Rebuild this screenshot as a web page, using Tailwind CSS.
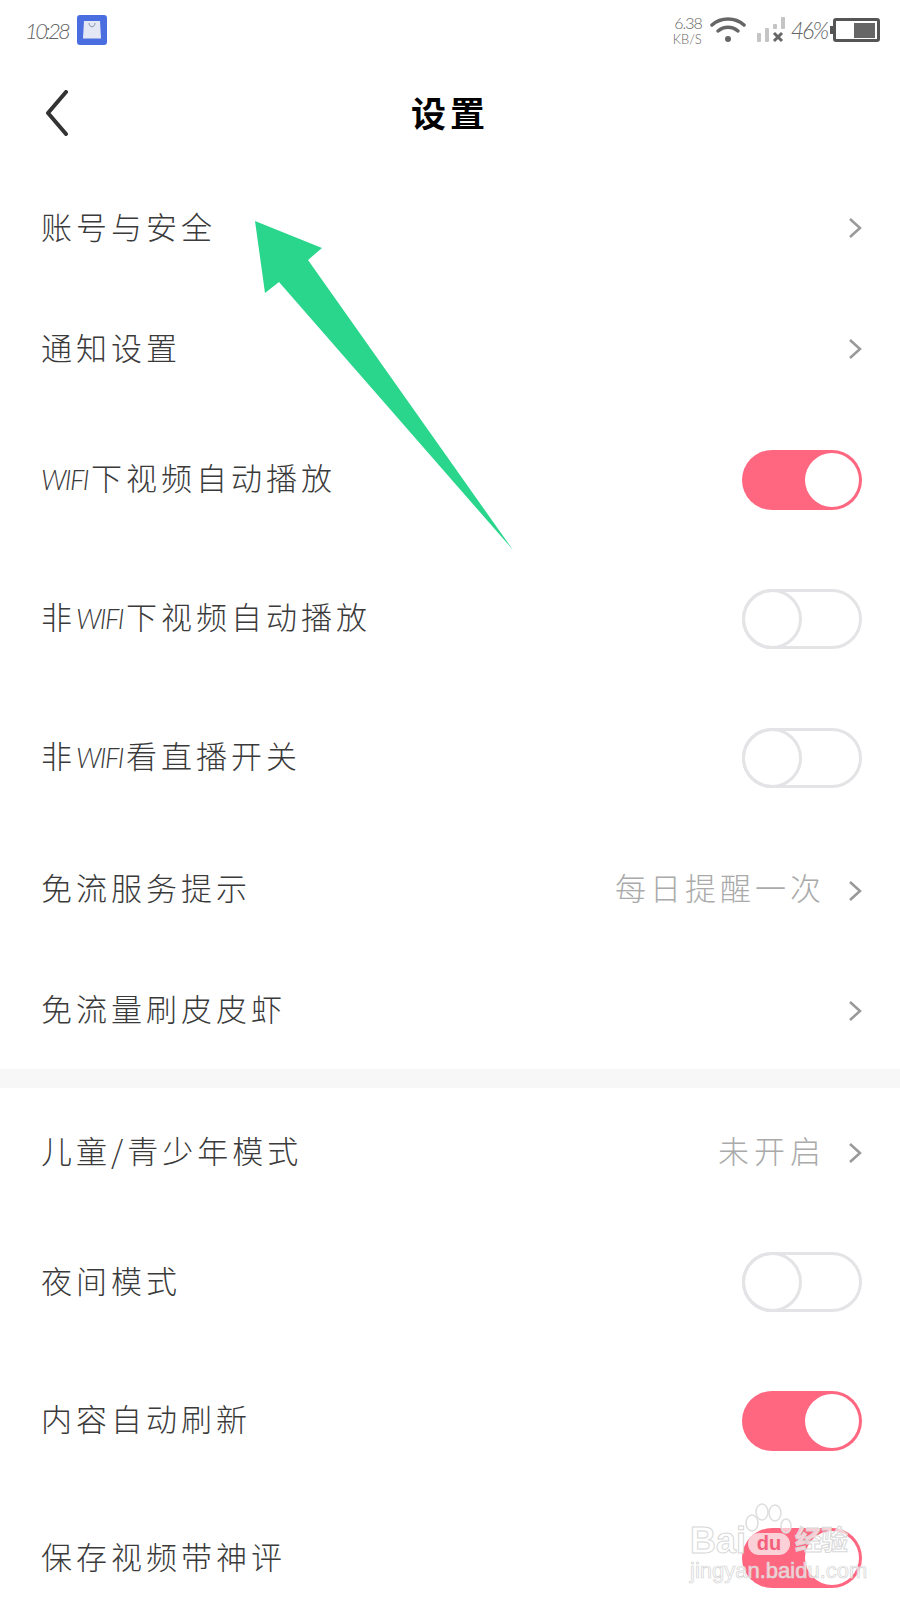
<!DOCTYPE html>
<html>

<head>
    <title>设置</title>
    <script src="https://cdn.jsdelivr.net/npm/@tailwindcss/browser@4"></script>
</head>

<body class="bg-white">
    <div class="relative w-[900px] h-[1600px] overflow-hidden bg-white text-[#3a3a3a] font-['Noto_Sans_CJK_SC','Noto_Sans',sans-serif]">

        <!-- Status bar -->
        <div class="h-[60px] pl-[25px] pr-[20px] flex items-center justify-between text-[#666]">
            <div class="flex items-center gap-[9px]">
                <span class="italic font-light text-[22px] tracking-[-2.600px] font-['Lato',sans-serif]">10:28</span>
                <svg width="30" height="30" viewBox="0 0 30 30">
                    <rect width="30" height="30" rx="3" fill="#4a6ee0" />
                    <path d="M7 6h16l1 17.500h-18z" fill="#e4e8f4" />
                    <path d="M12 8c0 5 6 5 6 0" fill="none" stroke="#8a93b0" stroke-width="1" />
                </svg>
            </div>
            <div class="flex items-center">
                <div class="flex flex-col items-end leading-none mr-[8px] font-['Lato',sans-serif]">
                    <span class="text-[16px] font-light tracking-[-1px]">6.38</span>
                    <span class="text-[13px] font-light mt-[2px]">KB/S</span>
                </div>
                <svg width="36" height="28" viewBox="0 0 36 28" class="mr-[9px]">
                    <g fill="none" stroke="#666" stroke-width="3.500" stroke-linecap="round">
                        <path d="M2 9c9-8 23-8 32 0" />
                        <path d="M8 15c6-5 14-5 20 0" />
                    </g>
                    <circle cx="18" cy="23" r="3" fill="#666" />
                </svg>
                <svg width="30" height="28" viewBox="0 0 30 28" class="mr-[6px]">
                    <g fill="#c4c4c4">
                        <rect x="2" y="17" width="4" height="9" rx="1" />
                        <rect x="10" y="12" width="4" height="14" rx="1" />
                        <rect x="18" y="8" width="4" height="5" rx="1" />
                        <rect x="26" y="1" width="4" height="12" rx="1" />
                    </g>
                    <path d="M19 17l8 8m0-8l-8 8" stroke="#666" stroke-width="3" />
                </svg>
                <span class="text-[23px] italic font-light tracking-[-2px] mr-[6px] font-['Lato',sans-serif]">46%</span>
                <div class="relative w-[47px] h-[24px] rounded-[3px] border-[3px] border-[#555] flex justify-end items-center pr-[2px]">
                    <div class="absolute left-[-6px] top-[5px] w-[3px] h-[8px] bg-[#555]"></div>
                    <div class="w-[21px] h-[15px] bg-[#666]"></div>
                </div>
            </div>
        </div>

        <!-- Header -->
        <div class="relative h-[108px] flex items-center justify-center pb-[6px]">
            <svg width="24" height="46" viewBox="0 0 24 46" class="absolute left-[45px] top-[30px]">
                <path d="M21 2L3 23l18 21" fill="none" stroke="#333" stroke-width="4" stroke-linecap="round" stroke-linejoin="round" />
            </svg>
            <h1 class="text-[35px] font-bold text-black tracking-[4px] leading-none">设置</h1>
        </div>

        <!-- First group -->
        <div class="flex items-center justify-between pl-[41px] pr-[38px] h-[121px]">
            <span class="pb-[4px] text-[31px] font-light tracking-[4px]">账号与安全</span>
            <svg class="mb-[2px]" width="14" height="22" viewBox="0 0 14 22"><path d="M2 2l10 9-10 9" fill="none" stroke="#999" stroke-width="2.500" /></svg>
        </div>
        <div class="flex items-center justify-between pl-[41px] pr-[38px] h-[120px]">
            <span class="pb-[4px] text-[31px] font-light tracking-[4px]">通知设置</span>
            <svg width="14" height="22" viewBox="0 0 14 22"><path d="M2 2l10 9-10 9" fill="none" stroke="#999" stroke-width="2.500" /></svg>
        </div>
        <div class="flex items-center justify-between pl-[41px] pr-[38px] h-[140px]">
            <span class="pb-[4px] text-[31px] font-light tracking-[4px]"><span class="mr-[3px] italic text-[27px] tracking-[-1.500px] font-['Lato',sans-serif]">WIFI</span>下视频自动播放</span>
            <div class="mt-[2px] w-[120px] h-[60px] rounded-full bg-[#ff6680] flex items-center justify-end pr-[3px]">
                <div class="w-[54px] h-[54px] rounded-full bg-white"></div>
            </div>
        </div>
        <div class="flex items-center justify-between pl-[41px] pr-[38px] h-[138px]">
            <span class="pb-[4px] text-[31px] font-light tracking-[4px]">非<span class="mr-[3px] italic text-[27px] tracking-[-1.500px] font-['Lato',sans-serif]">WIFI</span>下视频自动播放</span>
            <div class="mt-[2px] w-[120px] h-[60px] rounded-full border-[3px] border-[#e4e4e7] flex items-center">
                <div class="w-[60px] h-[60px] -ml-[3px] rounded-full border-[3px] border-[#e4e4e7]"></div>
            </div>
        </div>
        <div class="flex items-center justify-between pl-[41px] pr-[38px] h-[140px]">
            <span class="pb-[4px] text-[31px] font-light tracking-[4px]">非<span class="mr-[3px] italic text-[27px] tracking-[-1.500px] font-['Lato',sans-serif]">WIFI</span>看直播开关</span>
            <div class="mt-[2px] w-[120px] h-[60px] rounded-full border-[3px] border-[#e4e4e7] flex items-center">
                <div class="w-[60px] h-[60px] -ml-[3px] rounded-full border-[3px] border-[#e4e4e7]"></div>
            </div>
        </div>
        <div class="flex items-center justify-between pl-[41px] pr-[38px] h-[124px]">
            <span class="pb-[4px] text-[31px] font-light tracking-[4px]">免流服务提示</span>
            <div class="flex items-center gap-[23px]">
                <span class="pb-[4px] text-[31px] font-light tracking-[4px] text-[#aaa]">每日提醒一次</span>
                <svg class="mt-[4px]" width="14" height="22" viewBox="0 0 14 22"><path d="M2 2l10 9-10 9" fill="none" stroke="#999" stroke-width="2.500" /></svg>
            </div>
        </div>
        <div class="flex items-center justify-between pl-[41px] pr-[38px] h-[118px]">
            <span class="pb-[4px] text-[31px] font-light tracking-[4px]">免流量刷皮皮虾</span>
            <svg class="mt-[2px]" width="14" height="22" viewBox="0 0 14 22"><path d="M2 2l10 9-10 9" fill="none" stroke="#999" stroke-width="2.500" /></svg>
        </div>

        <div class="h-[19px] bg-[#f7f7f7]"></div>

        <!-- Second group -->
        <div class="flex items-center justify-between pl-[41px] pr-[38px] h-[128px]">
            <span class="pb-[4px] text-[31px] font-light tracking-[4px]">儿童/青少年模式</span>
            <div class="flex items-center gap-[22px]">
                <span class="pb-[4px] text-[31px] font-light tracking-[5px] text-[#aaa]">未开启</span>
                <svg class="mt-[2px]" width="14" height="22" viewBox="0 0 14 22"><path d="M2 2l10 9-10 9" fill="none" stroke="#999" stroke-width="2.500" /></svg>
            </div>
        </div>
        <div class="flex items-center justify-between pl-[41px] pr-[38px] h-[132px]">
            <span class="pb-[4px] text-[31px] font-light tracking-[4px]">夜间模式</span>
            <div class="w-[120px] h-[60px] rounded-full border-[3px] border-[#e4e4e7] flex items-center">
                <div class="w-[60px] h-[60px] -ml-[3px] rounded-full border-[3px] border-[#e4e4e7]"></div>
            </div>
        </div>
        <div class="flex items-center justify-between pl-[41px] pr-[38px] h-[144px]">
            <span class="pb-[4px] text-[31px] font-light tracking-[4px]">内容自动刷新</span>
            <div class="mt-[2px] w-[120px] h-[60px] rounded-full bg-[#ff6680] flex items-center justify-end pr-[3px]">
                <div class="w-[54px] h-[54px] rounded-full bg-white"></div>
            </div>
        </div>
        <div class="flex items-center justify-between pl-[41px] pr-[38px] h-[132px]">
            <span class="pb-[4px] text-[31px] font-light tracking-[4px]">保存视频带神评</span>
            <div class="w-[120px] h-[60px] rounded-full bg-[#ff6680] flex items-center justify-end pr-[3px]">
                <div class="w-[54px] h-[54px] rounded-full bg-white"></div>
            </div>
        </div>

        <!-- Green annotation arrow -->
        <svg class="absolute left-0 top-0 pointer-events-none" width="900" height="600" viewBox="0 0 900 600">
            <path d="M255 221L322 248L308 260L513 550L279 282L265 293Z" fill="#2ad68c" />
        </svg>

        <!-- Baidu watermark -->
        <div class="absolute left-[690px] top-[1503px] w-[170px] h-[92px] pointer-events-none">
            <svg class="absolute left-[54px] top-0" width="50" height="34" viewBox="0 0 50 34">
                <g fill="#fff" fill-opacity="0.6" stroke="#ddd" stroke-width="1.500">
                    <ellipse cx="8" cy="20" rx="6" ry="8" />
                    <ellipse cx="18" cy="9" rx="6" ry="8" />
                    <ellipse cx="31" cy="10" rx="6" ry="8" />
                    <ellipse cx="42" cy="23" rx="5" ry="7" />
                </g>
            </svg>
            <span class="absolute left-0 top-[20px] text-[36px] leading-none font-bold text-white/60 [-webkit-text-stroke:1px_#d8d8d8] font-['Liberation_Sans',sans-serif]">Bai</span>
            <span class="absolute left-[58px] top-[30px] w-[42px] h-[22px] rounded-full bg-[#fbd0d7] text-[#f4607a] text-[20px] leading-[20px] font-bold text-center font-['Liberation_Sans',sans-serif]">du</span>
            <span class="absolute left-[105px] top-[22px] text-[27px] leading-none font-bold tracking-[-1px] text-white/70 [-webkit-text-stroke:1px_#d8d8d8]">经验</span>
            <span class="absolute left-0 top-[57px] text-[22px] leading-none text-white/70 [-webkit-text-stroke:0.7px_#d4d4d4] font-['Liberation_Sans',sans-serif]">jingyan.baidu.com</span>
        </div>
    </div>
</body>

</html>
